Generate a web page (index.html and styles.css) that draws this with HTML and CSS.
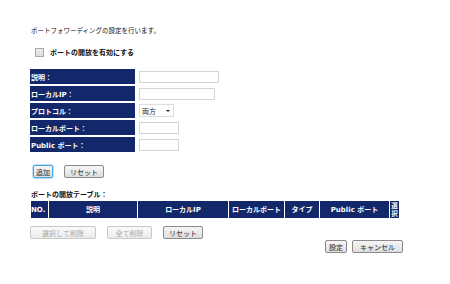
FILE: index.html
```html
<!DOCTYPE html>
<html lang="ja">
<head>
<meta charset="utf-8">
<link rel="stylesheet" href="styles.css">
</head>
<body>
<div class="page">
  <p class="intro">ポートフォワーディングの設定を行います。</p>
  <label class="enable"><span class="cb"></span><span>ポートの開放を有効にする</span></label>

  <table class="form">
    <tr><th>説明：</th><td><span class="inp w80"></span></td></tr>
    <tr><th>ローカルIP：</th><td><span class="inp w76"></span></td></tr>
    <tr><th>プロトコル：</th><td><span class="sel">両方<span class="arrow"></span></span></td></tr>
    <tr><th>ローカルポート：</th><td><span class="inp w40"></span></td></tr>
    <tr><th>Public ポート：</th><td><span class="inp w40"></span></td></tr>
  </table>

  <div class="btnrow first">
    <button class="btn focus">追加</button>
    <button class="btn">リセット</button>
  </div>

  <p class="caption">ポートの開放テーブル：</p>
  <table class="list">
    <tr>
      <th class="c-no">NO.</th>
      <th class="c-desc">説明</th>
      <th class="c-ip">ローカルIP</th>
      <th class="c-port">ローカルポート</th>
      <th class="c-type">タイプ</th>
      <th class="c-pub">Public ポート</th>
      <th class="c-sel">選<br>択</th>
    </tr>
  </table>

  <div class="btnrow second">
    <button class="btn dis wide">選択して削除</button>
    <button class="btn dis mid">全て削除</button>
    <button class="btn">リセット</button>
  </div>

  <div class="btnrow final">
    <button class="btn set">設定</button>
    <button class="btn cancel">キャンセル</button>
  </div>
</div>
</body>
</html>
```
FILE: styles.css
```css
html, body { margin: 0; padding: 0; background: #fff; }
body {
  font-family: "Noto Sans CJK JP", "DejaVu Sans", sans-serif;
  font-size: 7px;
  color: #222;
  width: 450px;
  height: 284px;
  overflow: hidden;
}
.page { padding: 26px 0 0 31px; }
.intro { margin: 0; font-size: 6.5px; line-height: 9px; color: #111; }
.enable {
  display: flex;
  align-items: center;
  gap: 6px;
  margin: 13px 0 0 4px;
  font-weight: bold;
  font-size: 7px;
  line-height: 9px;
  color: #111;
}
.cb {
  width: 7px; height: 7px;
  border: 1px solid #aaa;
  background: linear-gradient(#eee, #ddd);
}
table { border-collapse: separate; }
.form { border-spacing: 0 2px; margin-top: 10px; margin-left: -1px; }
.form th {
  background: #13286a;
  color: #fff;
  width: 104px;
  height: 15px;
  padding: 0 0 0 1px;
  text-align: left;
  font-size: 7px;
  font-weight: bold;
  font-family: "DejaVu Sans", "Noto Sans CJK JP", sans-serif;
}
.form td { padding: 0 0 0 4px; height: 15px; }
.inp {
  display: block;
  height: 12px;
  border: 1px solid #d4d4d8;
  background: #fff;
  box-sizing: border-box;
}
.w80 { width: 80px; }
.w76 { width: 76px; }
.w40 { width: 40px; }
.sel {
  display: flex;
  align-items: center;
  justify-content: space-between;
  width: 35px;
  height: 13px;
  box-sizing: border-box;
  border: 1px solid #dcdcdc;
  padding: 0 3px 0 2px;
  font-size: 7px;
  color: #222;
}
.arrow {
  width: 0; height: 0;
  border-left: 2px solid transparent;
  border-right: 2px solid transparent;
  border-top: 2px solid #222;
}
.btnrow { display: flex; gap: 11px; }
.btnrow.first { margin: 11px 0 0 2px; }
.btn {
  font-family: "Noto Sans CJK JP", sans-serif;
  font-size: 7px;
  color: #222;
  height: 13px;
  padding: 0 5px;
  line-height: 10px;
  border: 1px solid #8a8a8a;
  border-radius: 2px;
  background: linear-gradient(#f6f6f6, #dedede);
}
.btn.focus { border-color: #4aa3df; box-shadow: 0 0 0 0.5px #7cc0ee; padding: 0 2px; }
.btn.dis { color: #aaa; border-color: #c8c8c8; background: linear-gradient(#fafafa, #ececec); }
.btn.wide { width: 66px; }
.btn.mid { width: 45px; }
.caption { margin: 12px 0 0; font-weight: bold; font-size: 7px; line-height: 9px; color: #111; }
.list { border-spacing: 1px 0; margin: 2px 0 0 -1px; }
.list th {
  background: #13286a;
  color: #fff;
  font-weight: bold;
  font-size: 7px;
  font-family: "DejaVu Sans", "Noto Sans CJK JP", sans-serif;
  height: 17px;
  padding: 0;
  text-align: center;
  line-height: 8px;
}
.c-no { width: 17px; text-align: left !important; }
.c-desc { width: 88px; }
.c-ip { width: 90px; }
.c-port { width: 55px; }
.c-type { width: 34px; }
.c-pub { width: 69px; }
.c-sel { width: 9px; font-size: 6.5px !important; }
.btnrow.second { margin: 8px 0 0 -1px; }
.btnrow.final { justify-content: flex-end; gap: 5px; margin: 1px 0 0; width: 372px; }
.btn.set { width: 22px; padding: 0; }
.btn.cancel { width: 51px; }
```
